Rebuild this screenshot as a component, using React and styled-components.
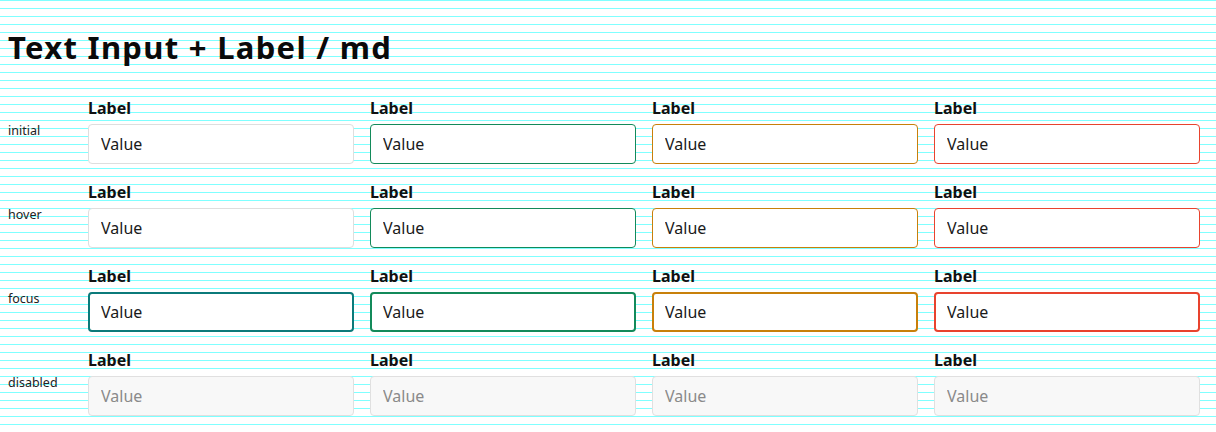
import React from "react";
import styled, { createGlobalStyle } from "styled-components";

const GlobalStyle = createGlobalStyle`
  html, body {
    margin: 0;
    padding: 0;
    background: #fff;
  }

  body {
    font-family: "Noto Sans", "Liberation Sans", sans-serif;
    color: #111;
  }
`;

const Page = styled.div`
  width: 1216px;
  height: 432px;
  overflow: hidden;
  padding: 8px;
  box-sizing: border-box;
  background-color: #ffffff;
  background-image: linear-gradient(
    to bottom,
    rgb(128, 255, 255) 0px,
    rgb(128, 255, 255) 1px,
    rgba(255, 255, 255, 0) 1px,
    rgba(255, 255, 255, 0) 8px
  );
  background-size: 100% 8px;
  background-repeat: repeat;
`;

const Title = styled.h1`
  margin: 0;
  padding-top: 21px;
  height: 92px;
  box-sizing: border-box;
  font-size: 31px;
  font-weight: 700;
  letter-spacing: 1.3px;
  line-height: 37px;
  color: #0a0a0a;
`;

const Grid = styled.div`
  display: grid;
  grid-template-columns: 64px repeat(4, 266px);
  column-gap: 16px;
  row-gap: 20px;
`;

const StateName = styled.div`
  padding-top: 24px;
  font-size: 12.5px;
  line-height: 14px;
  color: #222;
`;

const Field = styled.div`
  display: flex;
  flex-direction: column;
`;

const Label = styled.label`
  height: 24px;
  font-size: 16px;
  font-weight: 700;
  line-height: 17px;
  color: #111;
`;

const tones = {
  neutral: { border: "#dedede", focus: "#0b7a7a" },
  success: { border: "#138a5a", focus: "#138a5a" },
  warning: { border: "#c8800a", focus: "#c8800a" },
  error: { border: "#e8432e", focus: "#e8432e" },
};

const Input = styled.input`
  width: 266px;
  height: 40px;
  box-sizing: border-box;
  padding: 0 ${(p) => (p.$focus ? 11 : 12)}px;
  border: ${(p) => (p.$focus ? 2 : 1)}px solid
    ${(p) =>
      p.disabled
        ? "#e0e0e0"
        : p.$focus
        ? tones[p.$tone].focus
        : tones[p.$tone].border};
  border-radius: 4px;
  background: ${(p) => (p.disabled ? "#f8f8f8" : "#fff")};
  color: ${(p) => (p.disabled ? "#8a8a8a" : "#1a1a1a")};
  font-family: "Noto Sans", "Liberation Sans", sans-serif;
  font-size: 16px;
  outline: none;
`;

const states = ["initial", "hover", "focus", "disabled"];
const toneList = ["neutral", "success", "warning", "error"];

export default function App() {
  return (
    <>
      <GlobalStyle />
      <Page>
        <Title>Text Input + Label / md</Title>
        <Grid>
          {states.map((state) => (
            <React.Fragment key={state}>
              <StateName>{state}</StateName>
              {toneList.map((tone) => (
                <Field key={tone}>
                  <Label>Label</Label>
                  <Input
                    readOnly
                    value="Value"
                    $tone={tone}
                    $focus={state === "focus"}
                    disabled={state === "disabled"}
                  />
                </Field>
              ))}
            </React.Fragment>
          ))}
        </Grid>
      </Page>
    </>
  );
}
